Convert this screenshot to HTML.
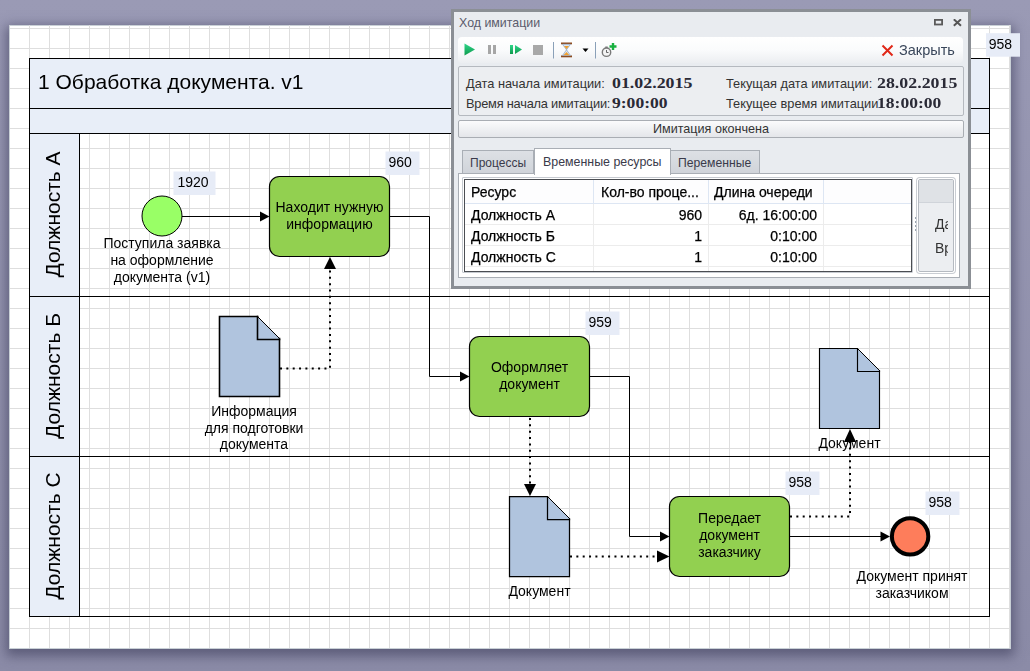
<!DOCTYPE html>
<html><head><meta charset="utf-8">
<style>
html,body{margin:0;padding:0;}
body{width:1030px;height:671px;overflow:hidden;position:relative;background:linear-gradient(#9a9ab5,#8b8ba7);font-family:"Liberation Sans",sans-serif;}
#page{position:absolute;left:9px;top:25px;width:1000px;height:622px;border:1px solid #c9d0d6;background:#fff;box-shadow:0 4px 11px 3px rgba(60,60,90,0.6);}
svg{position:absolute;left:0;top:0;will-change:transform;}
.dlg{position:absolute;left:451px;top:9px;width:514px;height:274px;border:3px solid #8b8f95;background:#e9ecf0;font-family:"Liberation Sans",sans-serif;color:#333;}
.abs{position:absolute;white-space:nowrap;}
</style></head><body>
<div id="page"></div>
<svg width="1030" height="671" viewBox="0 0 1030 671">
<defs>
<pattern id="grid" x="29" y="28" width="20" height="20" patternUnits="userSpaceOnUse">
<rect x="0" y="0" width="1" height="20" fill="#dedede"/>
<rect x="0" y="0" width="20" height="1" fill="#dedede"/>
</pattern>
</defs>
<rect x="10" y="25" width="1000" height="623" fill="url(#grid)"/>
<!-- pool -->
<g fill="#e8eef8" stroke="#000" stroke-width="1">
<rect x="29.5" y="58.5" width="960" height="50"/>
<rect x="29.5" y="108.5" width="960" height="25"/>
<rect x="29.5" y="133.5" width="50" height="163"/>
<rect x="29.5" y="296.5" width="50" height="160"/>
<rect x="29.5" y="456.5" width="50" height="160"/>
</g>
<g fill="none" stroke="#000" stroke-width="1">
<rect x="29.5" y="58.5" width="960" height="558"/>
<line x1="79.5" y1="296.5" x2="989.5" y2="296.5"/>
<line x1="79.5" y1="456.5" x2="989.5" y2="456.5"/>
</g>
<g font-family="Liberation Sans" fill="#000">
<text x="38" y="89" font-size="21">1 Обработка документа. v1</text>
<text transform="translate(59.5,214.5) rotate(-90)" font-size="21" text-anchor="middle">Должность А</text>
<text transform="translate(59.5,376) rotate(-90)" font-size="21" text-anchor="middle">Должность Б</text>
<text transform="translate(59.5,536) rotate(-90)" font-size="21" text-anchor="middle">Должность С</text>
</g>
<!-- badges -->
<g fill="#e7ecf7">
<rect x="173.5" y="171.5" width="42" height="23.5"/>
<rect x="385.5" y="151.5" width="34" height="23.5"/>
<rect x="585.5" y="311.5" width="34" height="23.5"/>
<rect x="785.5" y="471.5" width="34" height="23.5"/>
<rect x="925.5" y="491.5" width="34" height="23.5"/>
<rect x="986" y="33.2" width="34" height="23.5"/>
</g>
<g font-family="Liberation Sans" font-size="14" fill="#000">
<text x="177.5" y="187">1920</text>
<text x="388.5" y="167">960</text>
<text x="588.5" y="327">959</text>
<text x="788.5" y="487">958</text>
<text x="928.5" y="507">958</text>
<text x="988.8" y="49">958</text>
</g>
<!-- shapes -->
<circle cx="162" cy="216" r="20" fill="#99ff66" stroke="#000" stroke-width="1"/>
<circle cx="910.1" cy="536.4" r="18.2" fill="#fe7d5b" stroke="#000" stroke-width="4"/>
<g fill="#92d050" stroke="#000" stroke-width="1.2">
<rect x="269.5" y="176.5" width="120" height="80" rx="10"/>
<rect x="469.5" y="336.5" width="120" height="80" rx="10"/>
<rect x="669.5" y="496.5" width="120" height="80" rx="10"/>
</g>
<g stroke-linejoin="miter" stroke-linecap="square">
<path d="M219.5 316.5 H257.5 L279.5 338.5 V396.5 H219.5 Z" fill="#b0c4de" stroke="none"/><path d="M257.5 316.5 H219.5 V396.5 H279.5 V338.5" fill="none" stroke="#000" stroke-width="1.6"/><path d="M257.5 316.5 L279.5 338.5" fill="none" stroke="#000" stroke-width="1"/><path d="M257.5 316.5 V339.5 H279.5" fill="none" stroke="#000" stroke-width="1.6"/>
<path d="M509.5 496.5 H547.5 L569.5 518.5 V576.5 H509.5 Z" fill="#b0c4de" stroke="none"/><path d="M547.5 496.5 H509.5 V576.5 H569.5 V518.5" fill="none" stroke="#000" stroke-width="1.25"/><path d="M547.5 496.5 L569.5 518.5" fill="none" stroke="#000" stroke-width="1"/><path d="M547.5 496.5 V519.5 H569.5" fill="none" stroke="#000" stroke-width="1.25"/>
<path d="M819.5 348.5 H857.5 L879.5 370.5 V428.5 H819.5 Z" fill="#b0c4de" stroke="none"/><path d="M857.5 348.5 H819.5 V428.5 H879.5 V370.5" fill="none" stroke="#000" stroke-width="1.15"/><path d="M857.5 348.5 L879.5 370.5" fill="none" stroke="#000" stroke-width="1"/><path d="M857.5 348.5 V371.5 H879.5" fill="none" stroke="#000" stroke-width="1.15"/>
</g>
<!-- solid connectors -->
<g fill="none" stroke="#000" stroke-width="1">
<path d="M182 216.5 H261"/>
<path d="M389.5 216.5 H429.5 V376.5 H461"/>
<path d="M589.5 376.5 H629.5 V536.5 H661"/>
<path d="M789.5 536.5 H882"/>
</g>
<g fill="#000">
<path d="M260 211.5 L269.5 216.5 L260 221.5 Z"/>
<path d="M460 371.5 L469.5 376.5 L460 381.5 Z"/>
<path d="M660 531.5 L669.5 536.5 L660 541.5 Z"/>
<path d="M880.5 531.5 L890 536.5 L880.5 541.5 Z"/>
</g>
<!-- dotted connectors -->
<g fill="none" stroke="#000" stroke-width="2" stroke-dasharray="2 4.35">
<path d="M280 368.5 H330 V270"/>
<path d="M530 418 V484"/>
<path d="M570 556.5 H658"/>
<path d="M790 516.5 H850 V442"/>
</g>
<g fill="#000">
<path d="M324 269 L330 257 L336 269 Z"/>
<path d="M524 484 L530 496 L536 484 Z"/>
<path d="M657 550.5 L669.5 556.5 L657 562.5 Z"/>
<path d="M844 442 L850 429 L856 442 Z"/>
</g>
<!-- labels -->
<g font-family="Liberation Sans" font-size="14" fill="#000" text-anchor="middle">
<text x="162" y="247.5">Поступила заявка</text>
<text x="162" y="264.5">на оформление</text>
<text x="162" y="281.5">документа (v1)</text>
<text x="329.5" y="211.5">Находит нужную</text>
<text x="329.5" y="228.5">информацию</text>
<text x="529.5" y="371.5">Оформляет</text>
<text x="529.5" y="388.5">документ</text>
<text x="729.5" y="523">Передает</text>
<text x="729.5" y="540">документ</text>
<text x="729.5" y="557">заказчику</text>
<text x="254" y="416">Информация</text>
<text x="254" y="433">для подготовки</text>
<text x="254" y="449">документа</text>
<text x="539.5" y="596">Документ</text>
<text x="849.5" y="448">Документ</text>
<text x="912" y="580.7">Документ принят</text>
<text x="912" y="597.5">заказчиком</text>
</g>
</svg>

<div class="dlg">
<div class="abs" style="left:5px;top:4px;font-size:12.4px;color:#5a5b6c;line-height:14px;">Ход имитации</div>
<svg style="left:480px;top:7px" width="30" height="10">
<rect x="0.9" y="0.9" width="7.2" height="4.6" fill="none" stroke="#5a5a5a" stroke-width="1.8"/>
<path d="M19.8 0.3 L27 6.7 M27 0.3 L19.8 6.7" stroke="#555" stroke-width="2"/>
</svg>
<div class="abs" style="left:4px;top:25px;width:505px;height:26px;border-radius:4px;background:linear-gradient(#ffffff,#fafbfc 50%,#eceef1);"></div>
<svg style="left:0;top:25px" width="514" height="28">
<defs><linearGradient id="gr" x1="0" y1="0" x2="0" y2="1"><stop offset="0" stop-color="#2fd58a"/><stop offset="1" stop-color="#0e9a4c"/></linearGradient></defs>
<path d="M10.5 6.5 L21 12.5 L10.5 18.5 Z" fill="url(#gr)"/>
<rect x="34" y="8" width="3" height="9" fill="#a6a6a6"/><rect x="39" y="8" width="3" height="9" fill="#a6a6a6"/>
<rect x="56" y="8" width="3" height="9" fill="url(#gr)"/><path d="M61 8 L68 12.5 L61 17 Z" fill="url(#gr)"/>
<rect x="79" y="8" width="10" height="10" fill="#a8a8a8"/>
<rect x="99" y="5" width="1" height="16.5" fill="#8aa0b8"/>
<rect x="107" y="5.5" width="11" height="1.8" fill="#8b4a1e"/><rect x="107" y="18.5" width="11" height="1.8" fill="#8b4a1e"/>
<path d="M108.5 7.3 H116.5 L112.5 12.8 L116.5 18.5 H108.5 L112.5 12.8 Z" fill="#dbe6f2" stroke="#8aa0c0" stroke-width="0.7"/>
<path d="M110 9 H115 L112.5 12 Z M109.5 18.3 L112.5 15 L115.5 18.3 Z" fill="#f0a030"/>
<path d="M128.5 11.5 H134.5 L131.5 15 Z" fill="#000"/>
<rect x="141" y="5" width="1" height="16.5" fill="#8aa0b8"/>
<circle cx="152.5" cy="15.2" r="4.2" fill="#f4f4f4" stroke="#7a7a7a" stroke-width="1.4"/><path d="M152.5 13 V15.5 H154.5" fill="none" stroke="#666" stroke-width="1"/><rect x="151.3" y="9.5" width="2.4" height="1.5" fill="#777"/>
<path d="M159 6 V13 M155.5 9.5 H162.5" stroke="#18b040" stroke-width="2.4"/>
<path d="M428.5 8.5 L438.5 18.5 M438.5 8.5 L428.5 18.5" stroke="#e02818" stroke-width="2"/>
</svg>
<div class="abs" style="left:445px;top:30px;font-size:14.5px;color:#39465a;line-height:17px;">Закрыть</div>
<div class="abs" style="left:4px;top:54px;width:504px;height:48px;border:1px solid #b5b9bf;border-radius:2px;background:#eceef1;"></div>
<div class="abs" style="left:12px;top:64px;font-size:12.8px;color:#333;line-height:15px;">Дата начала имитации:</div>
<div class="abs" style="left:12px;top:84px;font-size:12.8px;letter-spacing:-0.22px;color:#333;line-height:15px;">Время начала имитации:</div>
<div class="abs" style="left:272px;top:64px;font-size:12.8px;color:#333;line-height:15px;">Текущая дата имитации:</div>
<div class="abs" style="left:272px;top:84px;font-size:12.8px;color:#333;line-height:15px;">Текущее время имитации</div>
<div class="abs" style="left:158px;top:63px;font:bold 15px 'Liberation Serif',serif;transform:scaleX(1.19);transform-origin:0 0;color:#2a2a36;line-height:17px;">01.02.2015</div>
<div class="abs" style="left:158px;top:83px;font:bold 15px 'Liberation Serif',serif;transform:scaleX(1.17);transform-origin:0 0;color:#2a2a36;line-height:17px;">9:00:00</div>
<div class="abs" style="left:423px;top:63px;font:bold 15px 'Liberation Serif',serif;transform:scaleX(1.19);transform-origin:0 0;color:#2a2a36;line-height:17px;">28.02.2015</div>
<div class="abs" style="left:423px;top:83px;font:bold 15px 'Liberation Serif',serif;transform:scaleX(1.17);transform-origin:0 0;color:#2a2a36;line-height:17px;">18:00:00</div>
<div class="abs" style="left:4px;top:108px;width:504px;height:16px;border:1px solid #a9adb3;border-radius:2px;background:linear-gradient(#fbfbfc,#e4e6ea);"></div>
<div class="abs" style="left:4px;top:110px;width:506px;text-align:center;font-size:12.6px;color:#333;line-height:15px;">Имитация окончена</div>
<div class="abs" style="left:4px;top:161px;width:500px;height:103px;border:1px solid #a9aeb5;background:#fff;"></div>
<div class="abs" style="left:8px;top:138px;width:70px;height:22px;border:1px solid #a9aeb5;border-bottom:none;background:linear-gradient(#dde0e5,#d0d4da);"></div>
<div class="abs" style="left:216px;top:138px;width:88px;height:22px;border:1px solid #a9aeb5;border-bottom:none;background:linear-gradient(#dde0e5,#d0d4da);"></div>
<div class="abs" style="left:80px;top:136px;width:135px;height:26px;border:1px solid #a9aeb5;border-bottom:none;background:#fff;"></div>
<div class="abs" style="left:16px;top:144px;font-size:12px;color:#3a3a4a;line-height:15px;">Процессы</div>
<div class="abs" style="left:89px;top:143px;font-size:12.4px;color:#3a3a4a;line-height:15px;">Временные ресурсы</div>
<div class="abs" style="left:224px;top:144px;font-size:12.2px;color:#3a3a4a;line-height:15px;">Переменные</div>
<div class="abs" style="left:8px;top:165px;width:449px;height:94px;border:1px solid #c6cad0;border-radius:1px;"></div>
<div class="abs" style="left:10px;top:167px;width:446px;height:91px;border:1px solid #4a4d52;background:#fff;overflow:hidden;">
<svg style="left:0;top:0" width="449" height="92">
<rect x="0" y="0" width="449" height="23" fill="#fdfdfe"/>
<g stroke="#dde6f3" stroke-width="1"><line x1="0" y1="23.5" x2="449" y2="23.5"/><line x1="128.5" y1="0" x2="128.5" y2="23"/><line x1="243.5" y1="0" x2="243.5" y2="23"/><line x1="358.5" y1="0" x2="358.5" y2="23"/></g>
<g stroke="#ececec" stroke-width="1"><line x1="0" y1="44.5" x2="449" y2="44.5"/><line x1="0" y1="65.5" x2="449" y2="65.5"/><line x1="0" y1="86.5" x2="449" y2="86.5"/><line x1="128.5" y1="24" x2="128.5" y2="92"/><line x1="243.5" y1="24" x2="243.5" y2="92"/><line x1="358.5" y1="24" x2="358.5" y2="92"/></g>
</svg>
<div class="abs" style="left:6px;top:3.5px;font-size:14px;color:#000;line-height:16px;-webkit-text-stroke:0.25px #000;">Ресурс</div>
<div class="abs" style="left:136px;top:3.5px;font-size:14px;color:#000;line-height:16px;-webkit-text-stroke:0.25px #000;">Кол-во проце...</div>
<div class="abs" style="left:249px;top:3.5px;font-size:14px;color:#000;line-height:16px;-webkit-text-stroke:0.25px #000;">Длина очереди</div>
<div class="abs" style="left:6px;top:27px;font-size:14px;color:#000;line-height:16px;-webkit-text-stroke:0.25px #000;">Должность А</div>
<div class="abs" style="left:6px;top:48px;font-size:14px;color:#000;line-height:16px;-webkit-text-stroke:0.25px #000;">Должность Б</div>
<div class="abs" style="left:6px;top:69px;font-size:14px;color:#000;line-height:16px;-webkit-text-stroke:0.25px #000;">Должность С</div>
<div class="abs" style="left:0;width:237px;text-align:right;top:27px;font-size:14px;color:#000;line-height:16px;-webkit-text-stroke:0.25px #000;">960</div>
<div class="abs" style="left:0;width:237px;text-align:right;top:48px;font-size:14px;color:#000;line-height:16px;-webkit-text-stroke:0.25px #000;">1</div>
<div class="abs" style="left:0;width:237px;text-align:right;top:69px;font-size:14px;color:#000;line-height:16px;-webkit-text-stroke:0.25px #000;">1</div>
<div class="abs" style="left:0;width:352px;text-align:right;top:27px;font-size:14px;color:#000;line-height:16px;-webkit-text-stroke:0.25px #000;">6д. 16:00:00</div>
<div class="abs" style="left:0;width:352px;text-align:right;top:48px;font-size:14px;color:#000;line-height:16px;-webkit-text-stroke:0.25px #000;">0:10:00</div>
<div class="abs" style="left:0;width:352px;text-align:right;top:69px;font-size:14px;color:#000;line-height:16px;-webkit-text-stroke:0.25px #000;">0:10:00</div>
</div>
<div class="abs" style="left:461px;top:205px;width:2px;height:16px;background:repeating-linear-gradient(#9aa4b0 0 2px,transparent 2px 4px);"></div>
<div class="abs" style="left:464px;top:167px;width:34px;height:91px;border:1px solid #b5bac1;border-radius:2px;background:#eceef1;overflow:hidden;box-shadow:0 0 0 1px #fff, 0 0 0 2px #c9cdd3;">
<div class="abs" style="left:0;top:0;width:34px;height:22px;background:#dfe2e6;border-bottom:1px solid #d0d4da;"></div>
<div class="abs" style="left:16px;top:36px;width:13px;overflow:hidden;font-size:14px;color:#333;line-height:16px;">Да</div>
<div class="abs" style="left:16px;top:60px;width:13px;overflow:hidden;font-size:14px;color:#333;line-height:16px;">Вр</div>
</div>
</div>
</body></html>
